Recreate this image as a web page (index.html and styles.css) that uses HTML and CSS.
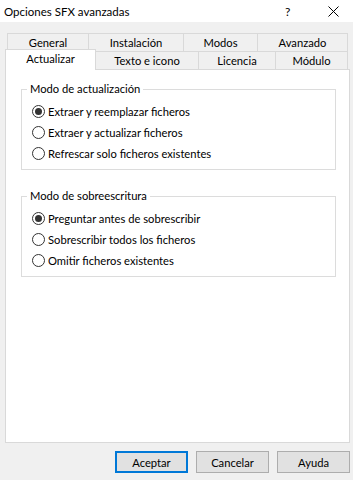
FILE: index.html
```html
<!DOCTYPE html>
<html lang="es">
<head>
    <meta charset="UTF-8">
    <meta name="viewport" content="width=device-width, initial-scale=1.0">
    <title>Opciones SFX avanzadas</title>
    <link rel="stylesheet" href="styles.css">
</head>
<body>

<div class="titlebar">
    <span class="title">Opciones SFX avanzadas</span>
    <span class="help">?</span>
    <span class="close">
        <svg width="11" height="11" viewBox="0 0 11 11">
            <path d="M0.5 0.5 L10.5 10.5 M10.5 0.5 L0.5 10.5" stroke="#000" stroke-width="1" fill="none"/>
        </svg>
    </span>
</div>

<div class="tabs">
    <div class="tab-row">
        <div class="tab tab-general">General</div>
        <div class="tab tab-instalacion">Instalación</div>
        <div class="tab tab-modos">Modos</div>
        <div class="tab tab-avanzado">Avanzado</div>
    </div>
    <div class="tab-row">
        <div class="tab tab-actualizar active">Actualizar</div>
        <div class="tab tab-texto">Texto e icono</div>
        <div class="tab tab-licencia">Licencia</div>
        <div class="tab tab-modulo">Módulo</div>
    </div>
</div>

<div class="panel">
    <fieldset class="group">
        <legend>Modo de actualización</legend>
        <div class="options">
            <label class="option"><span class="radio checked"></span>Extraer y reemplazar ficheros</label>
            <label class="option"><span class="radio"></span>Extraer y actualizar ficheros</label>
            <label class="option"><span class="radio"></span>Refrescar solo ficheros existentes</label>
        </div>
    </fieldset>
    <fieldset class="group">
        <legend>Modo de sobreescritura</legend>
        <div class="options">
            <label class="option"><span class="radio checked"></span>Preguntar antes de sobrescribir</label>
            <label class="option"><span class="radio"></span>Sobrescribir todos los ficheros</label>
            <label class="option"><span class="radio"></span>Omitir ficheros existentes</label>
        </div>
    </fieldset>
</div>

<div class="buttons">
    <button class="btn default">Aceptar</button>
    <button class="btn">Cancelar</button>
    <button class="btn">Ayuda</button>
</div>

</body>
</html>
```

FILE: styles.css
```css
body {
    margin: 0;
    width: 353px;
    height: 480px;
    overflow: hidden;
    background-color: #f0f0f0;
    font-family: Lato, "Noto Sans", sans-serif;
    font-size: 11.2px;
    color: #000;
}
.titlebar {
    height: 22px;
    background-color: #fff;
    display: flex;
    align-items: center;
    padding-left: 4px;
}
.title {
    flex: 1;
    font-size: 11.5px;
}
.help {
    width: 43px;
    font-size: 12px;
}
.close {
    width: 25px;
    display: flex;
    align-items: center;
}
.tabs {
    margin-top: 11px;
}
.tab-row {
    display: flex;
    height: 18px;
    padding-left: 7px;
}
.tab {
    box-sizing: border-box;
    border-top: 1px solid #d9d9d9;
    border-left: 1px solid #d9d9d9;
    text-align: center;
    line-height: 17px;
}
.tab:last-child {
    border-right: 1px solid #d9d9d9;
}
.tab-general { width: 81px; }
.tab-instalacion { width: 95px; }
.tab-modos { width: 74px; }
.tab-avanzado { width: 91px; }
.tab-actualizar { width: 91px; }
.tab-texto { width: 102px; }
.tab-licencia { width: 77px; }
.tab-modulo { width: 73px; }
.tab.active {
    position: relative;
    z-index: 1;
    margin-left: -2px;
    margin-top: -2px;
    height: 21px;
    background-color: #fff;
    border-right: 1px solid #d9d9d9;
}
.tab.active + .tab {
    border-left: none;
}
.panel {
    box-sizing: border-box;
    height: 374px;
    margin: 0 3px 0 5px;
    padding: 11px 13px 0 15px;
    background-color: #fff;
    border: 1px solid #d9d9d9;
}
.group {
    margin: 0 0 18px 0;
    padding: 0;
    border: 1px solid #dcdcdc;
}
.group legend {
    margin-left: 5px;
    padding: 0 3px;
    line-height: 16px;
}
.options {
    padding: 4px 0 5px 10px;
}
.option {
    display: flex;
    align-items: center;
    height: 21px;
}
.radio {
    box-sizing: border-box;
    width: 13px;
    height: 13px;
    margin-right: 3px;
    border: 1px solid #333;
    border-radius: 50%;
    display: flex;
    align-items: center;
    justify-content: center;
}
.radio.checked::after {
    content: "";
    width: 7px;
    height: 7px;
    border-radius: 50%;
    background-color: #333;
}
.buttons {
    display: flex;
    justify-content: flex-end;
    gap: 8px;
    margin-top: 8px;
    padding-right: 3px;
}
.btn {
    box-sizing: border-box;
    width: 73px;
    height: 22px;
    padding: 0;
    font-family: inherit;
    font-size: 11.2px;
    color: #000;
    background-color: #e1e1e1;
    border: 1px solid #adadad;
}
.btn.default {
    border: 2px solid #0078d7;
}
```
